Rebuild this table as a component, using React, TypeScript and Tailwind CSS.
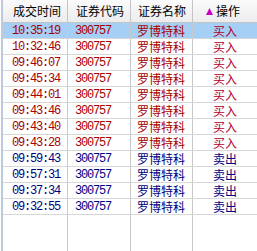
import React from "react";

const rows: { t: string; s: string; sel?: boolean }[] = [
  { t: "10:35:19", s: "买入", sel: true },
  { t: "10:32:46", s: "买入" },
  { t: "09:46:07", s: "买入" },
  { t: "09:45:34", s: "买入" },
  { t: "09:44:01", s: "买入" },
  { t: "09:43:46", s: "买入" },
  { t: "09:43:40", s: "买入" },
  { t: "09:43:28", s: "买入" },
  { t: "09:59:43", s: "卖出" },
  { t: "09:57:31", s: "卖出" },
  { t: "09:37:34", s: "卖出" },
  { t: "09:32:55", s: "卖出" },
];

const cjk = "font-['Noto_Sans_CJK_SC',sans-serif]";
const mono = "font-['Liberation_Mono',monospace] text-[12px] tracking-[-1.2px]";

export default function App() {
  return (
    <div className="w-[257px] h-[251px] bg-white overflow-hidden flex">
      <div className="w-[1px] h-full bg-white" />
      <div className="w-[2px] h-full bg-[#bccadb]" />
      <div className="flex-1 flex flex-col h-full">
        <div className={`flex h-[23px] border-b border-[#c4c4c4] bg-gradient-to-b from-[#fbfbfb] to-[#ececec] text-[12px] text-black ${cjk}`}>
          <div className="w-[65px] border-r border-[#c4c4c4] flex items-center pl-[10px]">成交时间</div>
          <div className="w-[63px] border-r border-[#c4c4c4] flex items-center pl-[8px]">证券代码</div>
          <div className="w-[62px] border-r border-[#c4c4c4] flex items-center pl-[7px]">证券名称</div>
          <div className="flex-1 flex items-center pl-[13px] gap-[3px]">
            <svg width="7" height="7" viewBox="0 0 7 7">
              <polygon points="3.5,0 7,7 0,7" fill="#c800c8" />
            </svg>
            <span>操作</span>
          </div>
        </div>
        {rows.map((r, i) => {
          const buy = r.s === "买入";
          const c = buy ? "text-[#a80000]" : "text-[#000080]";
          return (
            <div
              key={i}
              className={`flex h-[16px] border-b border-[#d6d6d6] ${r.sel ? "bg-[#a6cff5]" : ""} ${c}`}
            >
              <div className={`w-[65px] border-r border-[#c8c8c8] flex items-center pl-[9px] ${mono}`}>{r.t}</div>
              <div className={`w-[63px] border-r border-[#c8c8c8] flex items-center pl-[7px] ${mono}`}>300757</div>
              <div className={`w-[62px] border-r border-[#c8c8c8] flex items-center pl-[6px] text-[12px] ${cjk}`}>罗博特科</div>
              <div className={`flex-1 flex items-center justify-center text-[12px] ${cjk} ${buy ? "text-[#b0002c]" : ""}`}>{r.s}</div>
            </div>
          );
        })}
        <div className="flex flex-1">
          <div className="w-[65px] border-r border-[#c8c8c8]" />
          <div className="w-[63px] border-r border-[#c8c8c8]" />
          <div className="w-[62px] border-r border-[#c8c8c8]" />
          <div className="flex-1" />
        </div>
      </div>
    </div>
  );
}
